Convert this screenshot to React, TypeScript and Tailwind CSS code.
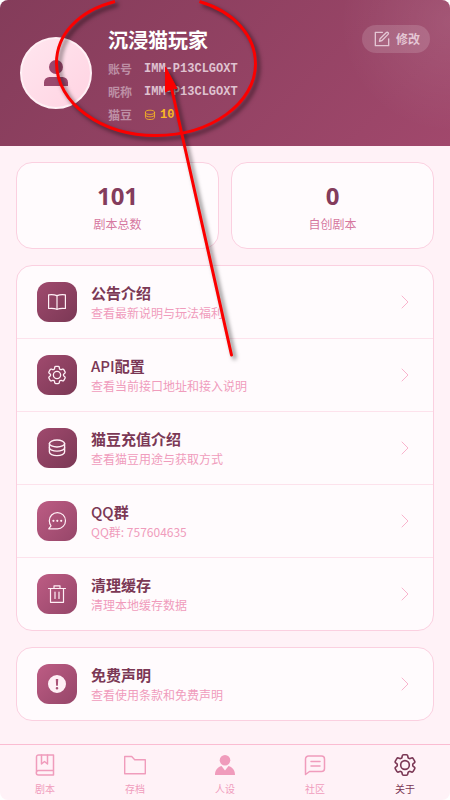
import type { ReactNode } from "react";

type IconProps = { className?: string };

const stroke = {
  fill: "none",
  stroke: "currentColor",
  strokeLinecap: "round" as const,
  strokeLinejoin: "round" as const,
};

function EditIcon({ className }: IconProps) {
  return (
    <svg viewBox="0 0 18 18" className={className} {...stroke} strokeWidth="1.5" aria-hidden="true">
      <path d="M9.5 1.500H1.500v15h15V8.800" />
      <path d="M6.800 8.600 13.900 1.800c.6-.6 1.500-.4 2 .1s.5 1.300-.1 1.900L9 10.700l-2.900.9z" />
    </svg>
  );
}

function CoinsIcon({ className }: IconProps) {
  return (
    <svg viewBox="0 0 20 20" className={className} {...stroke} strokeWidth="1.4" aria-hidden="true">
      <ellipse cx="10" cy="5.500" rx="7.600" ry="3.500" />
      <path d="M2.400 5.500v4.200c0 1.900 3.400 3.400 7.600 3.400s7.600-1.500 7.600-3.400V5.500" />
      <path d="M2.400 9.700v4.400c0 2 3.400 3.500 7.600 3.500s7.600-1.500 7.600-3.500V9.700" />
    </svg>
  );
}

function BookOpenIcon({ className }: IconProps) {
  return (
    <svg viewBox="0 0 20 20" className={className} {...stroke} strokeWidth="1.2" aria-hidden="true">
      <path d="M10 3.600C7.300 2.500 4.400 2.400 1.600 2.800v13.700c2.800-.4 5.700-.3 8.400.8 2.700-1.100 5.600-1.200 8.400-.8V2.800c-2.800-.4-5.700-.3-8.400.8z" />
      <path d="M10 3.600v13.700" />
    </svg>
  );
}

function GearIcon({ className }: IconProps) {
  return (
    <svg viewBox="1.5 1.5 21 21" className={className} {...stroke} strokeWidth="1.4" aria-hidden="true">
      <path d="M9.594 3.940c.090-.542.560-.940 1.110-.940h2.593c.550 0 1.020.398 1.110.940l.213 1.281c.063.374.313.686.645.870.074.040.147.083.220.127.325.196.720.257 1.075.124l1.217-.456a1.125 1.125 0 0 1 1.370.490l1.296 2.247a1.125 1.125 0 0 1-.260 1.431l-1.003.827c-.293.241-.438.613-.430.992a7.723 7.723 0 0 1 0 .255c-.008.378.137.750.430.991l1.004.827c.424.350.534.955.260 1.430l-1.298 2.247a1.125 1.125 0 0 1-1.369.491l-1.217-.456c-.355-.133-.750-.072-1.076.124a6.470 6.470 0 0 1-.220.128c-.331.183-.581.495-.644.869l-.213 1.281c-.090.543-.560.940-1.110.940h-2.594c-.550 0-1.019-.398-1.110-.940l-.213-1.281c-.062-.374-.312-.686-.644-.870a6.520 6.520 0 0 1-.220-.127c-.325-.196-.720-.257-1.076-.124l-1.217.456a1.125 1.125 0 0 1-1.369-.490l-1.297-2.247a1.125 1.125 0 0 1 .260-1.431l1.004-.827c.292-.240.437-.613.430-.991a6.932 6.932 0 0 1 0-.255c.007-.380-.138-.751-.430-.992l-1.004-.827a1.125 1.125 0 0 1-.260-1.430l1.297-2.247a1.125 1.125 0 0 1 1.370-.491l1.216.456c.356.133.751.072 1.076-.124.072-.044.146-.086.220-.128.332-.183.582-.495.644-.869z" />
      <circle cx="12" cy="12" r="3.800" />
    </svg>
  );
}

function ChatIcon({ className }: IconProps) {
  return (
    <svg viewBox="0 0 20 20" className={className} {...stroke} strokeWidth="1.2" aria-hidden="true">
      <path d="M1.700 17.800h8.700a8.100 8.100 0 1 0-8.100-8c0 1.900.6 3.600 1.700 5z" />
      <g fill="currentColor" stroke="none">
        <circle cx="6.400" cy="9.800" r="1.100" />
        <circle cx="10.300" cy="9.800" r="1.100" />
        <circle cx="14.200" cy="9.800" r="1.100" />
      </g>
    </svg>
  );
}

function TrashIcon({ className }: IconProps) {
  return (
    <svg viewBox="0 0 20 20" className={className} {...stroke} strokeWidth="1.2" aria-hidden="true">
      <path d="M1.500 4.500h17M3.500 4.500v13.800h13V4.500M7 4.500v-2.700h6v2.700M8 8v6.500M12 8v6.500" />
    </svg>
  );
}

function NoticeIcon({ className }: IconProps) {
  return (
    <svg viewBox="0 0 20 20" className={className} aria-hidden="true">
      <path
        fill="currentColor"
        fillRule="evenodd"
        d="M10 1a9 9 0 1 0 0 18 9 9 0 0 0 0-18zM8.800 5h2.400l-.3 6.700H9.100zM10 13a1.300 1.300 0 1 1 0 2.600 1.300 1.300 0 0 1 0-2.600z"
      />
    </svg>
  );
}

function NotebookIcon({ className }: IconProps) {
  return (
    <svg viewBox="0 0 24 24" className={className} {...stroke} strokeWidth="1.5" aria-hidden="true">
      <path d="M20.500 17.500V2H5.500a2 2 0 0 0-2 2v15.500M20.500 17.500H5.500a2.200 2.200 0 0 0 0 4.500h15v-4.500" />
      <path d="M8.500 2v9l3-2.500 3 2.500V2" />
    </svg>
  );
}

function FolderIcon({ className }: IconProps) {
  return (
    <svg viewBox="0 0 24 24" className={className} {...stroke} strokeWidth="1.4" aria-hidden="true">
      <path d="M1.700 3.500h7l3 3.200h10.600v14H1.700z" />
    </svg>
  );
}

function PersonIcon({ className }: IconProps) {
  return (
    <svg viewBox="0 0 24 24" className={className} fill="currentColor" aria-hidden="true">
      <circle cx="12" cy="7.300" r="5.300" />
      <path d="M2 22c0-4.500 2.300-7.800 6.500-9l3.500 4.500 3.500-4.500c4.200 1.200 6.500 4.500 6.500 9z" />
    </svg>
  );
}

function CommunityIcon({ className }: IconProps) {
  return (
    <svg viewBox="0 0 24 24" className={className} {...stroke} strokeWidth="1.5" aria-hidden="true">
      <path d="M2.500 21.500V6a3 3 0 0 1 3-3h13a3 3 0 0 1 3 3v9.500a3 3 0 0 1-3 3H6.500z" />
      <path d="M8 8.500h9M8 13h9" />
    </svg>
  );
}

function ChevronIcon({ className }: IconProps) {
  return (
    <svg viewBox="0 0 8 14" className={className} {...stroke} strokeWidth="1" aria-hidden="true">
      <path d="m1 1 6 6-6 6" />
    </svg>
  );
}

function Stat({ value, label }: { value: string; label: string }) {
  return (
    <div className="flex flex-1 flex-col items-center rounded-2xl border border-[#fbd0e0] bg-[#fffbfd] pt-[15px] pb-3.5">
      <strong className="font-['Noto_Sans','Noto_Sans_CJK_SC',sans-serif] text-2xl leading-9 font-bold text-[#843c5c]">{value}</strong>
      <span className="text-xs leading-5 text-[#d6789f]">{label}</span>
    </div>
  );
}

const DEEP = "from-[#a04a6e] to-[#7b3855]";
const LIGHT = "from-[#bd5c84] to-[#964669]";

function MenuRow({ icon, tone, title, text }: { icon: ReactNode; tone: string; title: ReactNode; text: string }) {
  return (
    <button type="button" className="flex w-full items-center gap-3.5 px-5 py-4 text-left">
      <span className={`flex size-10 shrink-0 items-center justify-center rounded-xl bg-linear-to-br text-[#fff0f6] ${tone}`}>
        {icon}
      </span>
      <span className="flex min-w-0 flex-1 flex-col">
        <span className="text-[15px] leading-[22px] font-bold text-[#7b3855]">{title}</span>
        <span className="text-xs leading-[18px] text-[#f09cbc]">{text}</span>
      </span>
      <ChevronIcon className="mr-1 h-3.5 w-2 text-[#f9b4cd]" />
    </button>
  );
}

function Card({ children }: { children: ReactNode }) {
  return (
    <section className="divide-y divide-[#fde2ec] overflow-hidden rounded-2xl border border-[#fbd0e0] bg-[#fffbfd]">
      {children}
    </section>
  );
}

function ProfileLine({ label, children }: { label: string; children: ReactNode }) {
  return (
    <div className="flex h-[18px] items-center gap-3 text-xs">
      <dt className="font-bold text-[#bd8fa5]">{label}</dt>
      <dd className="flex items-center gap-1 font-['Liberation_Mono',monospace] font-bold text-[#dfc2d0]">{children}</dd>
    </div>
  );
}

function Tab({ icon, label, active = false }: { icon: ReactNode; label: string; active?: boolean }) {
  return (
    <a
      href="#"
      aria-current={active ? "page" : undefined}
      className={`flex flex-1 flex-col items-center gap-1 pt-2 pb-[3px] text-[10px] leading-4 ${active ? "text-[#7b3855]" : "text-[#f09cbc]"}`}
    >
      {icon}
      {label}
    </a>
  );
}

function Annotation() {
  return (
    <svg
      className="pointer-events-none absolute top-0 left-0 drop-shadow-[3px_3px_2px_rgba(0,0,0,0.55)]"
      width="280"
      height="370"
      viewBox="0 0 280 370"
      aria-hidden="true"
    >
      <path d="M115 1.500C78 11 56.500 35 56.500 63c0 40 44.500 72.500 99.500 72.500S255.500 103 255.500 64c0-28-21-52-56-62.500" fill="none" stroke="#fb0000" strokeWidth="3" />
      <path d="m231.500 355-60-267" fill="none" stroke="#fb0000" strokeWidth="3" strokeLinecap="round" />
      <path d="m165.500 67 11.500 21.500-6 .5-5.500 3z" fill="#fb0000" stroke="#fb0000" strokeLinejoin="round" />
    </svg>
  );
}

export default function App() {
  return (
    <div className="min-h-screen bg-white font-['Noto_Sans_CJK_SC',sans-serif]">
      <div className="relative flex min-h-screen flex-col overflow-hidden rounded-lg bg-[#fff2f7]">
        <header className="flex items-center gap-4 bg-[radial-gradient(circle_at_100%_15%,rgba(255,255,255,0.09),transparent_110px),linear-gradient(135deg,#843c5a,#a1486c)] px-5 py-[22px]">
          <div className="flex size-[72px] shrink-0 items-center justify-center rounded-full border-2 border-[#fff0f5] bg-linear-to-br from-[#ffe6ef] to-[#ffd3e2] text-[#9a486d]">
            <svg viewBox="0 0 24 26" className="h-[26px] w-6" fill="currentColor" aria-hidden="true">
              <circle cx="12" cy="7" r="7" />
              <path d="M0 26v-3.500A5.500 5.500 0 0 1 5.500 17h13a5.500 5.500 0 0 1 5.500 5.500V26z" />
            </svg>
          </div>
          <div className="min-w-0 flex-1">
            <h1 className="mb-0.5 text-xl leading-9 font-bold text-white">沉浸猫玩家</h1>
            <dl className="flex flex-col gap-[5px]">
              <ProfileLine label="账号">IMM-P13CLGOXT</ProfileLine>
              <ProfileLine label="昵称">IMM-P13CLGOXT</ProfileLine>
              <ProfileLine label="猫豆">
                <CoinsIcon className="size-3 text-[#f9b824]" />
                <span className="text-[#f9b824]">10</span>
              </ProfileLine>
            </dl>
          </div>
          <button
            type="button"
            className="mt-[3px] flex h-7 items-center gap-1.5 self-start rounded-full bg-white/15 pr-2.5 pl-3 text-xs font-bold text-[#e4c6d4]"
          >
            <EditIcon className="size-4" />
            修改
          </button>
        </header>

        <main className="flex flex-col gap-4 px-4 py-4">
          <div className="flex gap-3">
            <Stat value="101" label="剧本总数" />
            <Stat value="0" label="自创剧本" />
          </div>
          <Card>
            <MenuRow tone={DEEP} icon={<BookOpenIcon className="size-5" />} title="公告介绍" text="查看最新说明与玩法福利" />
            <MenuRow
              tone={DEEP}
              icon={<GearIcon className="size-5" />}
              title={<><span className="font-medium">API</span>配置</>}
              text="查看当前接口地址和接入说明"
            />
            <MenuRow tone={DEEP} icon={<CoinsIcon className="size-5" />} title="猫豆充值介绍" text="查看猫豆用途与获取方式" />
            <MenuRow
              tone={LIGHT}
              icon={<ChatIcon className="size-5" />}
              title={<><span className="font-medium">QQ</span>群</>}
              text="QQ群: 757604635"
            />
            <MenuRow tone={LIGHT} icon={<TrashIcon className="size-5" />} title="清理缓存" text="清理本地缓存数据" />
          </Card>
          <Card>
            <MenuRow tone={LIGHT} icon={<NoticeIcon className="size-5" />} title="免费声明" text="查看使用条款和免费声明" />
          </Card>
        </main>

        <nav className="mt-auto flex border-t border-[#fbbcd2]" aria-label="主导航">
          <Tab icon={<NotebookIcon className="size-6" />} label="剧本" />
          <Tab icon={<FolderIcon className="size-6" />} label="存档" />
          <Tab icon={<PersonIcon className="size-6" />} label="人设" />
          <Tab icon={<CommunityIcon className="size-6" />} label="社区" />
          <Tab icon={<GearIcon className="size-6" />} label="关于" active />
        </nav>

        <Annotation />
      </div>
    </div>
  );
}
